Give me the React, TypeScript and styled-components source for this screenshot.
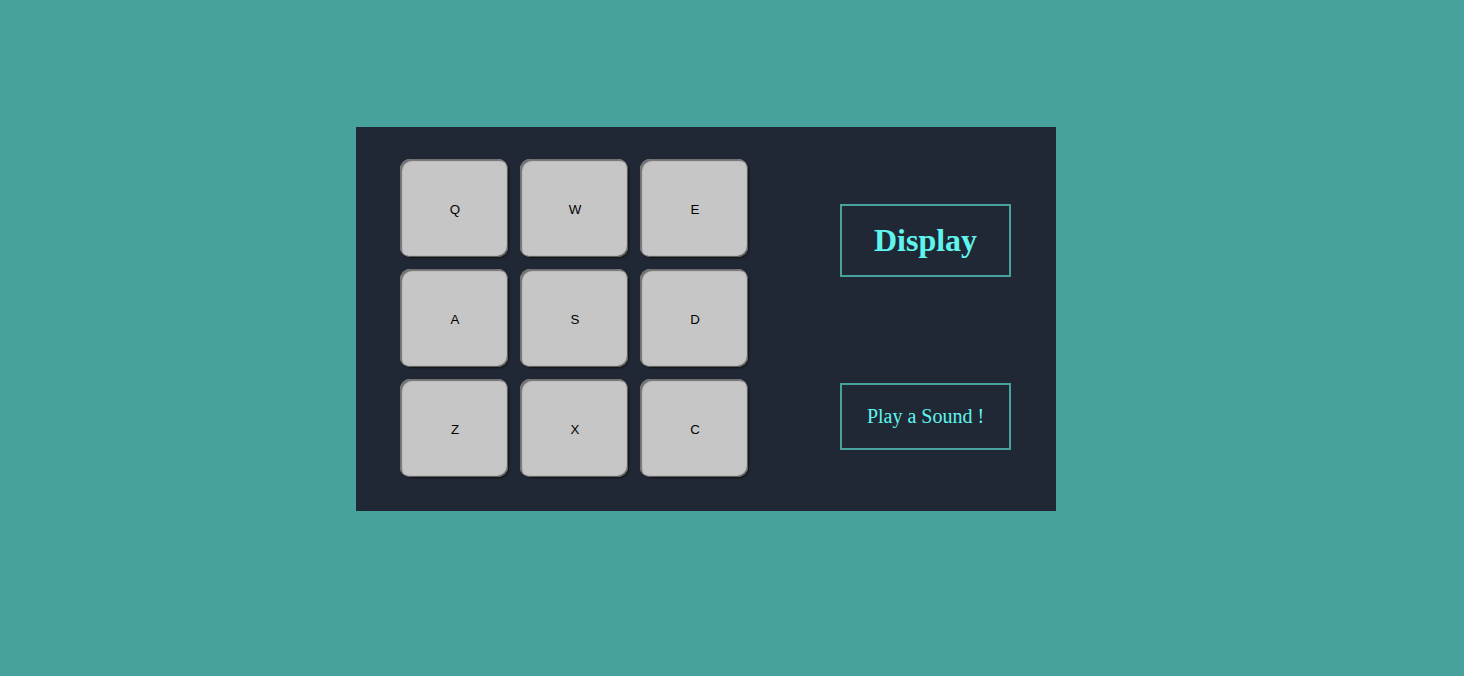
import React from "react";
import styled, { createGlobalStyle } from "styled-components";

const Global = createGlobalStyle`
  html, body { margin: 0; padding: 0; background: #47a29e; }
  body { width: 1464px; height: 676px; overflow: hidden; }
`;

const Page = styled.div`
  padding: 127px 0 0 356px;
`;

const Machine = styled.div`
  width: 700px;
  height: 384px;
  box-sizing: border-box;
  background: #212835;
  display: flex;
  padding: 32px 0 0 44px;
`;

const Pads = styled.div`
  display: grid;
  grid-template-columns: repeat(3, 108px);
  grid-auto-rows: 98px;
  gap: 12px;
`;

const Pad = styled.button`
  box-sizing: border-box;
  width: 108px;
  height: 98px;
  margin: 0;
  padding: 2px 0 0 2px;
  background: #c6c6c6;
  border: none;
  border-radius: 10px;
  box-shadow: inset 2px 2px 1px #727272, inset -1px -1px 1px #555, 1px 1px 2px #111;
  font-family: "Liberation Sans", Arial, sans-serif;
  font-size: 13.3px;
  color: #000;
  display: flex;
  align-items: center;
  justify-content: center;
`;

const Side = styled.div`
  display: flex;
  flex-direction: column;
  margin-left: 92px;
  padding-top: 45px;
`;

const Display = styled.div`
  box-sizing: border-box;
  width: 171px;
  height: 73px;
  border: 2px solid #47a29e;
  display: flex;
  align-items: center;
  justify-content: center;
  font-family: "Liberation Serif", "Times New Roman", serif;
  font-weight: bold;
  font-size: 32px;
  color: #5ff5ee;
`;

const Status = styled.div`
  box-sizing: border-box;
  width: 171px;
  height: 67px;
  margin-top: 106px;
  border: 2px solid #47a29e;
  display: flex;
  align-items: center;
  justify-content: center;
  font-family: "Liberation Serif", "Times New Roman", serif;
  font-size: 20px;
  color: #5ff5ee;
`;

const keys = ["Q", "W", "E", "A", "S", "D", "Z", "X", "C"];

export default function App() {
  return (
    <>
      <Global />
      <Page>
        <Machine>
          <Pads>
            {keys.map((k) => (
              <Pad key={k}>{k}</Pad>
            ))}
          </Pads>
          <Side>
            <Display>Display</Display>
            <Status>Play a Sound !</Status>
          </Side>
        </Machine>
      </Page>
    </>
  );
}
